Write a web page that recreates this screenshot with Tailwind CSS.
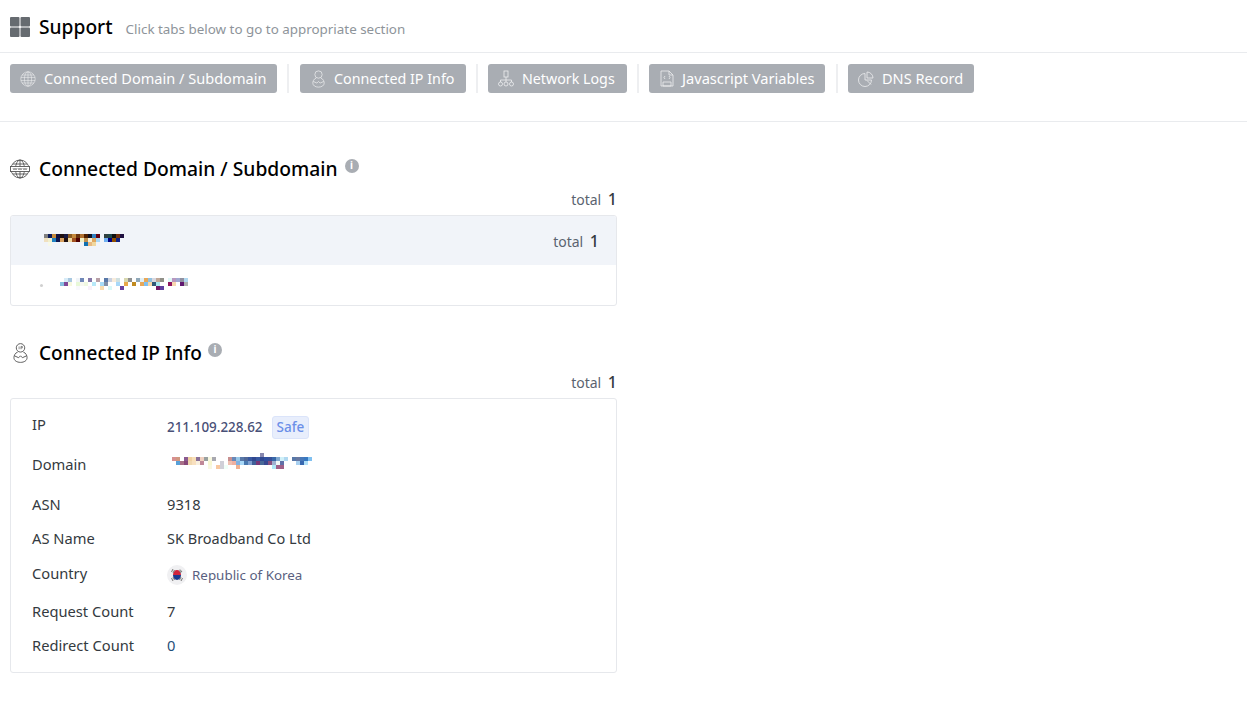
<!DOCTYPE html>
<html lang="en">
<head>
  <meta charset="UTF-8" />
  <title>Support</title>
  <script src="https://cdn.jsdelivr.net/npm/@tailwindcss/browser@4"></script>
</head>
<body class="bg-white font-['Noto_Sans',sans-serif] text-[#343a40] h-[710px] overflow-hidden">

  <!-- Header -->
  <header class="pl-[10px] h-[53px] border-b border-[#e9ebee] flex items-center pt-[7px]">
    <svg class="w-[20px] h-[20px] mr-[9px] mt-[-5px]" viewBox="0 0 20 20" fill="#666b70">
      <rect width="9.5" height="9.5" rx="1"/><rect x="10.5" width="9.5" height="9.5" rx="1"/>
      <rect y="10.5" width="9.5" height="9.5" rx="1"/><rect x="10.5" y="10.5" width="9.5" height="9.5" rx="1"/>
    </svg>
    <h1 class="text-[19.2px] font-medium text-black leading-none mt-[-5px]">Support</h1>
    <span class="text-[13.4px] text-[#8e949a] ml-[13px]">Click tabs below to go to appropriate section</span>
  </header>

  <!-- Tabs -->
  <nav class="h-[69px] border-b border-[#e9ebee] pl-[10px] pt-[11px] flex items-start">
    <a class="h-[29px] w-[267px] bg-[#a9adb3] rounded-[3px] text-white text-[14.55px] flex items-center pl-[10px] gap-[8px]">
      <svg class="w-[16px] h-[16px]" viewBox="0 0 20 20" fill="none" stroke="#fff" stroke-width=".8" opacity=".75"><circle cx="10" cy="10" r="9"/><ellipse cx="10" cy="10" rx="4.5" ry="9"/><path d="M10 1v18M2.5 5h15M1 8h18M1 12h18M2.500 15h15"/></svg>
      Connected Domain / Subdomain
    </a>
    <span class="w-[2px] h-[29px] bg-[#eeeff1] ml-[10px] mr-[11px]"></span>
    <a class="h-[29px] w-[166px] bg-[#a9adb3] rounded-[3px] text-white text-[14.3px] flex items-center pl-[12px] gap-[9px]">
      <svg class="w-[13px] h-[18px]" viewBox="0 0 16 22" fill="none" stroke="#fff" stroke-width=".9" opacity=".8"><circle cx="8" cy="5.5" r="4.500"/><path d="M5 10C2 11 1 14 1 16c0 3 3 5 7 5s7-2 7-5c0-2-1-5-4-6M1.500 14 6 16l2-2 2 2 4.500-2"/></svg>
      Connected IP Info
    </a>
    <span class="w-[2px] h-[29px] bg-[#eeeff1] mx-[10px]"></span>
    <a class="h-[29px] w-[139px] bg-[#a9adb3] rounded-[3px] text-white text-[14.25px] flex items-center pl-[10px] gap-[8px]">
      <svg class="w-[16px] h-[17px]" viewBox="0 0 16 17" fill="none" stroke="#fff" stroke-width=".8" opacity=".8"><rect x="6" y="1" width="4" height="6"/><path d="M8 7v3M2.500 12v-2h11v2M8 10v2"/><circle cx="2.500" cy="14" r="2"/><circle cx="8" cy="14" r="2"/><circle cx="13.500" cy="14" r="2"/></svg>
      Network Logs
    </a>
    <span class="w-[2px] h-[29px] bg-[#eeeff1] mx-[10px]"></span>
    <a class="h-[29px] w-[176px] bg-[#a9adb3] rounded-[3px] text-white text-[14.65px] flex items-center pl-[11px] gap-[8px]">
      <svg class="w-[14px] h-[17px]" viewBox="0 0 14 17" fill="none" stroke="#fff" stroke-width=".8" opacity=".8"><path d="M1 1h8l4 4v11H1zM9 1v4h4M3 12h8v4H3z"/><path d="M5 6 4 7.500 5 9M9 6l1 1.500L9 9"/></svg>
      Javascript Variables
    </a>
    <span class="w-[2px] h-[29px] bg-[#eeeff1] ml-[11px] mr-[10px]"></span>
    <a class="h-[29px] w-[126px] bg-[#a9adb3] rounded-[3px] text-white text-[14.55px] flex items-center pl-[10px] gap-[8px]">
      <svg class="w-[16px] h-[16px]" viewBox="0 0 16 16" fill="none" stroke="#fff" stroke-width=".8" opacity=".8"><path d="M7 2.500a6.500 6.500 0 1 0 6.500 6.500H7z"/><path d="M9 1a6 6 0 0 1 6 6H9z"/><path d="M9 9.500l4 4"/></svg>
      DNS Record
    </a>
  </nav>

  <main class="w-[607px] ml-[10px]">
    <!-- Domain section -->
    <section class="pt-[32px]">
      <div class="flex items-center h-[30px]">
        <svg class="w-[20px] h-[20px] mr-[9px]" viewBox="0 0 20 20" fill="none" stroke="#555" stroke-width=".9"><circle cx="10" cy="10" r="9"/><ellipse cx="10" cy="10" rx="4.5" ry="9"/><path d="M10 1v18M3 5h14M3 15h14"/><rect x="0.500" y="7.500" width="19" height="5" fill="#fff"/><path d="M3 9l1 2 1-2 1 2 1-2M8 9l1 2 1-2 1 2 1-2M13 9l1 2 1-2 1 2 1-2" stroke-width=".6"/></svg>
        <h2 class="text-[19.25px] font-medium text-black">Connected Domain / Subdomain</h2>
        <span class="w-[14px] h-[14px] rounded-full bg-[#a9adb3] text-white text-[10px] font-bold flex items-center justify-center ml-[7px] mt-[-7px]">i</span>
      </div>
      <div class="text-right text-[14px] text-[#5b6370] h-[30px] leading-[28px] mt-[1px]">total <span class="font-medium text-[16px] text-[#343a40] ml-[3px]">1</span></div>
      <div class="border border-[#e6e8ec] rounded-[3px] h-[91px] overflow-hidden">
        <div class="h-[49px] bg-[#f1f4f9] flex items-center justify-between pl-[33px] pr-[17px]">
          <svg data-px="808080,0b1a5a,c58a3c,101040,201010,181840,8a5a20,c58a3c,6a3410,b07030,502000,101020,3080c0,600010,,304040,204848,101010,703010,201040|f0e0c0,f0f0d0,2080c0,101850,d8a060,201010,f0d8a0,a05020,500000,f0f0c8,c09050,f8f0d8,e0a860,a8d8f8,,70b0f0,000080,905000,102080|,f8f8e8,,,,,,,,,1070b0,e8b880,f0d8a0" class="w-[80px] h-[16px] mt-[3px]" viewBox="0 0 80 16" shape-rendering="crispEdges"></svg>
          <span class="text-[14px] text-[#5b6370] mt-[1px]">total <span class="font-medium text-[16px] text-[#343a40] ml-[3px]">1</span></span>
        </div>
        <div class="h-[40px] flex items-center pl-[29px]">
          <span class="w-[3px] h-[3px] rounded-full bg-[#d0d0d0]"></span>
          <svg data-px=",d8ecf8,a8c8e0,,f0f4f8,7088b8,,8478a8,,b8a0a8,,5878a8,c8d0e0,f8ecdc,d0e0e0,,d8d8b0,909090,,90a8b8,e0f0f8,e8a858,90c0e0,d8d8e0,c0a898,909088,,e0f8f8,b898c0,a0a8d0,9090a0,b0d8f0|88c0e0,804898,f8f8e0,,e8f8d8,f8f8f0,f0f8e0,,b8e8f8,,a8dcf8,8090a8,,,a8d8f8,,e8a848,,c08a20,,e8a858,80c0f0,f8d8a8,305878,a8e8f0,,,901860,f8d8b0,,601870,b0b0b0|,,,,f8f8fc,,,f8f0f8,,,f8dcb0,,d8f8f8,,,6840a0,,,,,,,,,701868,6040a0" class="w-[128px] h-[16px] ml-[17px] mt-[2px]" viewBox="0 0 128 16" shape-rendering="crispEdges"></svg>
        </div>
      </div>
    </section>

    <!-- IP section -->
    <section class="pt-[32px]">
      <div class="flex items-center h-[30px]">
        <svg class="w-[15px] h-[22px] ml-[3px] mr-[11px]" viewBox="0 0 16 22" fill="none" stroke="#555" stroke-width="1"><circle cx="8" cy="5.500" r="4.500"/><path d="M6.500 4v3M8.500 7V4h1.500v1.500H8.500" stroke-width=".7"/><path d="M5 10C2 11 1 14 1 16c0 3 3 5 7 5s7-2 7-5c0-2-1-5-4-6M1.500 14 6 16l2-2 2 2 4.500-2"/></svg>
        <h2 class="text-[19px] font-medium text-black">Connected IP Info</h2>
        <span class="w-[14px] h-[14px] rounded-full bg-[#a9adb3] text-white text-[10px] font-bold flex items-center justify-center ml-[6px] mt-[-7px]">i</span>
      </div>
      <div class="text-right text-[14px] text-[#5b6370] h-[30px] leading-[28px]">total <span class="font-medium text-[16px] text-[#343a40] ml-[3px]">1</span></div>
      <div class="border border-[#e6e8ec] rounded-[3px] h-[275px] pl-[21px] pt-[11px] text-[14.7px] text-[#343a40]">
        <div class="grid grid-cols-[135px_1fr] h-[40px]">
          <span class="leading-[28px]">IP</span>
          <div class="flex items-center h-[34px]"><span class="text-[13.45px] font-medium text-[#495077]">211.109.228.62</span><span class="ml-[9px] h-[23px] px-[4px] bg-[#e8eefc] border border-[#dbe4fa] rounded-[3px] text-[#6b8fe8] text-[13.5px] font-medium leading-[21px]">Safe</span></div>
        </div>
        <div class="grid grid-cols-[135px_1fr] h-[40px]">
          <span class="leading-[28px]">Domain</span>
          <svg data-px=",,,,,,,,,,,,,,,,,,,,,,8888b0|d89090,d09880,,8a5a90,f0d0a0,f8e0b8,8a7098,f0d0c0,98a0a0,f8f8e0,a8a8b0,,,,c89090,6888b8,98c8e8,5878a8,506898,3858a0,304890,3858a0,304890,3050a0,385098,3868a8,80a8d0,d0f0f8,b0d8f0,,5878a8,6878a0,4878b8,3878c0,80c0f0|,58a0d8,a87088,884878,f0d8b0,f8e0c0,f8f0e0,c08898,,f8f8d0,,,d0d0d8,,f0c0b0,f0b0a0,80b0e0,a8d8f8,4878b0,80a0d0,406098,783878,486898,384890,885080,a0b0d0,f0f8f8,6070a8,,,,a8d0f0,3868b0,b0e0f8|,,,,,,,,,f8f8e0,,f8c8a0,d0d0d8,f0fff8,,,f0b090,,,,,,,,,b0e8f8,a06088,a06088" class="w-[140px] h-[16px] ml-[5px] mt-[3px]" viewBox="0 0 140 16" shape-rendering="crispEdges"></svg>
        </div>
        <div class="grid grid-cols-[135px_1fr] h-[34px] leading-[28px]"><span>ASN</span><span>9318</span></div>
        <div class="grid grid-cols-[135px_1fr] h-[34px] leading-[28px]"><span>AS Name</span><span class="text-[14.5px]">SK Broadband Co Ltd</span></div>
        <div class="grid grid-cols-[135px_1fr] h-[41px]">
          <span class="leading-[30px]">Country</span>
          <div class="flex items-center h-[34px] text-[13.4px] text-[#5a5f80]">
            <svg class="w-[20px] h-[20px] mr-[5px]" viewBox="0 0 20 20"><circle cx="10" cy="10" r="10" fill="#f0f0f2"/><path d="M6 10a4 5 0 0 1 8 0z" fill="#d0243c"/><path d="M6 10a4 5 0 0 0 8 0z" fill="#1a3a90"/><path d="M4.500 7l1.500-3M6 8l1.500-3M13 4.500 15 7M12.500 5.500 14 8M4.500 13 6 16M6 12l1.500 3M14 12l-1.500 3M15.500 13 14 16" stroke="#777" stroke-width="1"/></svg>
            Republic of Korea
          </div>
        </div>
        <div class="grid grid-cols-[135px_1fr] h-[34px] leading-[24px]"><span>Request Count</span><span>7</span></div>
        <div class="grid grid-cols-[135px_1fr] h-[34px] leading-[24px]"><span>Redirect Count</span><span class="text-[#1f4e79]">0</span></div>
      </div>
    </section>
  </main>

  <script>
    // pixelated (redacted) text: rows split by |, 4px cells
    document.querySelectorAll("svg[data-px]").forEach((svg) => {
      let html = "";
      svg.dataset.px.split("|").forEach((row, y) => {
        row.split(",").forEach((color, x) => {
          if (color) html += `<rect x="${x * 4}" y="${y * 4}" width="4" height="4" fill="#${color}"/>`;
        });
      });
      svg.innerHTML = html;
    });
  </script>
</body>
</html>
